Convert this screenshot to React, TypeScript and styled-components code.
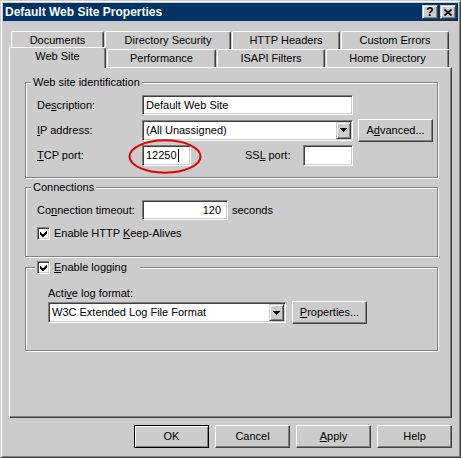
import React from "react";
import styled, { createGlobalStyle, css } from "styled-components";

const FACE = "#cccccc";
const SHADOW = "#808080";
const DARK = "#404040";
const LIGHT = "#ffffff";

const Global = createGlobalStyle`
  html, body { margin: 0; padding: 0; background: ${FACE}; }
  body {
    width: 461px; height: 458px; overflow: hidden;
    font-family: "Liberation Sans", Arial, sans-serif;
    font-size: 11px; color: #000;
  }
  * { box-sizing: border-box; }
`;

const sunken = css`
  background: #fff;
  border: 1px solid;
  border-color: ${SHADOW} ${LIGHT} ${LIGHT} ${SHADOW};
  box-shadow: inset 1px 1px ${DARK}, inset -1px -1px ${FACE};
`;

const Window = styled.div`
  width: 461px;
  height: 458px;
  background: ${FACE};
  border: 1px solid;
  border-color: ${FACE} ${DARK} ${DARK} ${FACE};
  box-shadow: inset 1px 1px ${LIGHT}, inset -1px -1px ${SHADOW};
  padding: 2px;
  display: flex;
  flex-direction: column;
`;

const TitleBar = styled.div`
  height: 18px;
  background: #003366;
  display: flex;
  align-items: center;
  padding: 0 2px 0 2px;
`;

const TitleText = styled.div`
  flex: 1;
  color: #fff;
  font-weight: bold;
  font-size: 12px;
  line-height: 14px;
  white-space: nowrap;
`;

const CaptionButtons = styled.div`
  display: flex;
  gap: 2px;
`;

const CaptionButton = styled.div`
  width: 16px;
  height: 14px;
  background: ${FACE};
  border: 1px solid;
  border-color: ${FACE} ${DARK} ${DARK} ${FACE};
  box-shadow: inset 1px 1px ${LIGHT}, inset -1px -1px ${SHADOW};
  display: flex;
  align-items: center;
  justify-content: center;
  font-weight: bold;
  font-size: 12px;
  line-height: 11px;
`;

const Body = styled.div`
  padding: 10px 6px 0 6px;
  display: flex;
  flex-direction: column;
`;

const TabRow = styled.div<{ $indent?: number }>`
  display: flex;
  gap: 1px;
  height: 18px;
  align-items: flex-start;
  margin-left: ${(p) => p.$indent ?? 0}px;
`;

const Tab = styled.div<{ $w: number; $active?: boolean }>`
  width: ${(p) => p.$w}px;
  height: ${(p) => (p.$active ? 21 : 18)}px;
  margin-top: ${(p) => (p.$active ? -2 : 0)}px;
  position: relative;
  z-index: ${(p) => (p.$active ? 2 : 0)};
  background: ${FACE};
  border-top: 1px solid ${LIGHT};
  border-left: 1px solid ${LIGHT};
  border-right: 1px solid ${DARK};
  border-radius: 2px 2px 0 0;
  box-shadow: inset -1px 0 ${SHADOW};
  text-align: center;
  padding-top: 2px;
  line-height: 13px;
  white-space: nowrap;
`;

const Panel = styled.div`
  height: 351px;
  background: ${FACE};
  border: 1px solid;
  border-color: ${LIGHT} ${DARK} ${DARK} ${LIGHT};
  box-shadow: inset -1px -1px ${SHADOW};
  padding: 8px 13px 0 15px;
  display: flex;
  flex-direction: column;
`;

const Group = styled.fieldset<{ $gap?: number }>`
  margin: ${(p) => p.$gap ?? 0}px 0 0 0;
  padding: 0;
  min-width: 0;
  border: 1px solid ${SHADOW};
  box-shadow: inset 1px 1px ${LIGHT}, 1px 1px ${LIGHT};
`;

const Caption = styled.legend<{ $offset: number; $padRight?: number }>`
  margin-left: ${(p) => p.$offset}px;
  padding: 0 ${(p) => p.$padRight ?? 2}px 0 2px;
  line-height: 13px;
  height: 13px;
  background: ${FACE};
  white-space: nowrap;
`;

const CaptionInner = styled.span`
  display: inline-flex;
  align-items: center;
  gap: 4px;
  height: 13px;
`;

const GroupBody = styled.div<{ $pad: string }>`
  padding: ${(p) => p.$pad};
  display: flex;
  flex-direction: column;
`;

const FormRow = styled.div<{ $h?: number; $mt?: number }>`
  display: flex;
  align-items: center;
  height: ${(p) => p.$h ?? 24}px;
  margin-top: ${(p) => p.$mt ?? 0}px;
`;

const FieldLabel = styled.span<{ $w?: number; $ml?: number }>`
  width: ${(p) => (p.$w ? `${p.$w}px` : "auto")};
  margin-left: ${(p) => p.$ml ?? 0}px;
  flex: none;
  line-height: 13px;
  white-space: nowrap;
`;

const TextBox = styled.div<{ $w: number; $h?: number; $right?: boolean }>`
  ${sunken};
  width: ${(p) => p.$w}px;
  height: ${(p) => p.$h ?? 21}px;
  flex: none;
  display: flex;
  align-items: center;
  justify-content: ${(p) => (p.$right ? "flex-end" : "flex-start")};
  padding: 0 ${(p) => (p.$right ? 6 : 3)}px 0 3px;
  line-height: 13px;
  white-space: nowrap;
  overflow: hidden;
`;

const Caret = styled.span`
  display: inline-block;
  width: 1px;
  height: 13px;
  background: #000;
  margin-left: 1px;
`;

const TcpWrap = styled.div`
  position: relative;
  flex: none;
`;

const Annotation = styled.svg`
  position: absolute;
  left: -14px;
  top: -6px;
  pointer-events: none;
  overflow: visible;
`;

const Combo = styled.div<{ $w: number }>`
  ${sunken};
  width: ${(p) => p.$w}px;
  height: 21px;
  flex: none;
  display: flex;
  align-items: stretch;
  padding: 1px;
`;

const ComboValue = styled.div`
  flex: 1;
  display: flex;
  align-items: center;
  padding-left: 2px;
  line-height: 13px;
  white-space: nowrap;
  overflow: hidden;
`;

const DropButton = styled.div`
  width: 15px;
  background: ${FACE};
  border: 1px solid;
  border-color: ${FACE} ${DARK} ${DARK} ${FACE};
  box-shadow: inset 1px 1px ${LIGHT}, inset -1px -1px ${SHADOW};
  display: flex;
  align-items: center;
  justify-content: center;
`;

const PushButton = styled.div<{ $default?: boolean; $ml?: number }>`
  width: 75px;
  height: 23px;
  flex: none;
  margin-left: ${(p) => p.$ml ?? 0}px;
  background: ${FACE};
  border: 1px solid;
  border-color: ${LIGHT} ${DARK} ${DARK} ${LIGHT};
  box-shadow: inset -1px -1px ${SHADOW};
  display: flex;
  align-items: center;
  justify-content: center;
  line-height: 13px;
  white-space: nowrap;
  ${(p) =>
    p.$default &&
    css`
      border-color: #000;
      box-shadow: inset 1px 1px ${LIGHT}, inset -1px -1px ${SHADOW};
    `}
`;

const CheckBox = styled.span`
  ${sunken};
  width: 13px;
  height: 13px;
  flex: none;
  display: inline-flex;
`;

const CheckRow = styled.div`
  display: flex;
  align-items: center;
  gap: 4px;
  height: 22px;
`;

const ButtonBar = styled.div`
  display: flex;
  justify-content: flex-end;
  gap: 6px;
  margin-top: 7px;
`;

const Check = () => (
  <CheckBox>
    <svg width="11" height="11" viewBox="0 0 11 11" shapeRendering="crispEdges" style={{ display: "block" }}>
      <polygon points="2,4 4,6 5,6 9,2 9,5 5,9 4,9 2,7" fill="#000" />
    </svg>
  </CheckBox>
);

const DownArrow = () => (
  <svg width="7" height="4" viewBox="0 0 7 4" shapeRendering="crispEdges">
    <polygon points="0,0 7,0 3.5,4" fill="#000" />
  </svg>
);

export default function App() {
  return (
    <>
      <Global />
      <Window>
        <TitleBar>
          <TitleText>Default Web Site Properties</TitleText>
          <CaptionButtons>
            <CaptionButton>?</CaptionButton>
            <CaptionButton>
              <svg width="8" height="7" viewBox="0 0 8 7">
                <path d="M0.5 0.5 L7.5 6.5 M7.5 0.5 L0.5 6.5" stroke="#000" strokeWidth="1.6" />
              </svg>
            </CaptionButton>
          </CaptionButtons>
        </TitleBar>
        <Body>
          <TabRow $indent={2}>
            <Tab $w={93}>Documents</Tab>
            <Tab $w={126}>Directory Security</Tab>
            <Tab $w={108}>HTTP Headers</Tab>
            <Tab $w={108}>Custom Errors</Tab>
          </TabRow>
          <TabRow>
            <Tab $w={97} $active>Web Site</Tab>
            <Tab $w={109}>Performance</Tab>
            <Tab $w={108}>ISAPI Filters</Tab>
            <Tab $w={123}>Home Directory</Tab>
          </TabRow>
          <Panel>
            <Group>
              <Caption $offset={5}>Web site identification</Caption>
              <GroupBody $pad="4px 0 10px 11px">
                <FormRow>
                  <FieldLabel $w={105}>
                    De<u>s</u>cription:
                  </FieldLabel>
                  <TextBox $w={211} $h={20}>Default Web Site</TextBox>
                </FormRow>
                <FormRow $mt={1}>
                  <FieldLabel $w={105}>
                    <u>I</u>P address:
                  </FieldLabel>
                  <Combo $w={211}>
                    <ComboValue>(All Unassigned)</ComboValue>
                    <DropButton>
                      <DownArrow />
                    </DropButton>
                  </Combo>
                  <PushButton $ml={5}>
                    A<u>d</u>vanced...
                  </PushButton>
                </FormRow>
                <FormRow $mt={1}>
                  <FieldLabel $w={105}>
                    <u>T</u>CP port:
                  </FieldLabel>
                  <TcpWrap>
                    <TextBox $w={49}>
                      12250
                      <Caret />
                    </TextBox>
                    <Annotation width="74" height="36" viewBox="0 0 74 36">
                      <ellipse cx="37" cy="17.5" rx="35.5" ry="16.2" fill="none" stroke="#e00000" strokeWidth="2" />
                    </Annotation>
                  </TcpWrap>
                  <FieldLabel $w={58} $ml={54}>
                    SS<u>L</u> port:
                  </FieldLabel>
                  <TextBox $w={50} />
                </FormRow>
              </GroupBody>
            </Group>

            <Group $gap={3}>
              <Caption $offset={5}>Connections</Caption>
              <GroupBody $pad="4px 0 12px 11px">
                <FormRow>
                  <FieldLabel $w={105}>
                    Co<u>n</u>nection timeout:
                  </FieldLabel>
                  <TextBox $w={86} $h={20} $right>
                    120
                  </TextBox>
                  <FieldLabel $ml={4}>seconds</FieldLabel>
                </FormRow>
                <CheckRow>
                  <Check />
                  <FieldLabel>
                    Enable HTTP <u>K</u>eep-Alives
                  </FieldLabel>
                </CheckRow>
              </GroupBody>
            </Group>

            <Group $gap={4}>
              <Caption $offset={9} $padRight={13}>
                <CaptionInner>
                  <Check />
                  <span>
                    <u>E</u>nable logging
                  </span>
                </CaptionInner>
              </Caption>
              <GroupBody $pad="13px 0 26px 22px">
                <FieldLabel>
                  Acti<u>v</u>e log format:
                </FieldLabel>
                <FormRow $h={23} $mt={1}>
                  <Combo $w={238}>
                    <ComboValue>W3C Extended Log File Format</ComboValue>
                    <DropButton>
                      <DownArrow />
                    </DropButton>
                  </Combo>
                  <PushButton $ml={6}>
                    <u>P</u>roperties...
                  </PushButton>
                </FormRow>
              </GroupBody>
            </Group>
          </Panel>
          <ButtonBar>
            <PushButton $default>OK</PushButton>
            <PushButton>Cancel</PushButton>
            <PushButton>
              <u>A</u>pply
            </PushButton>
            <PushButton>Help</PushButton>
          </ButtonBar>
        </Body>
      </Window>
    </>
  );
}
